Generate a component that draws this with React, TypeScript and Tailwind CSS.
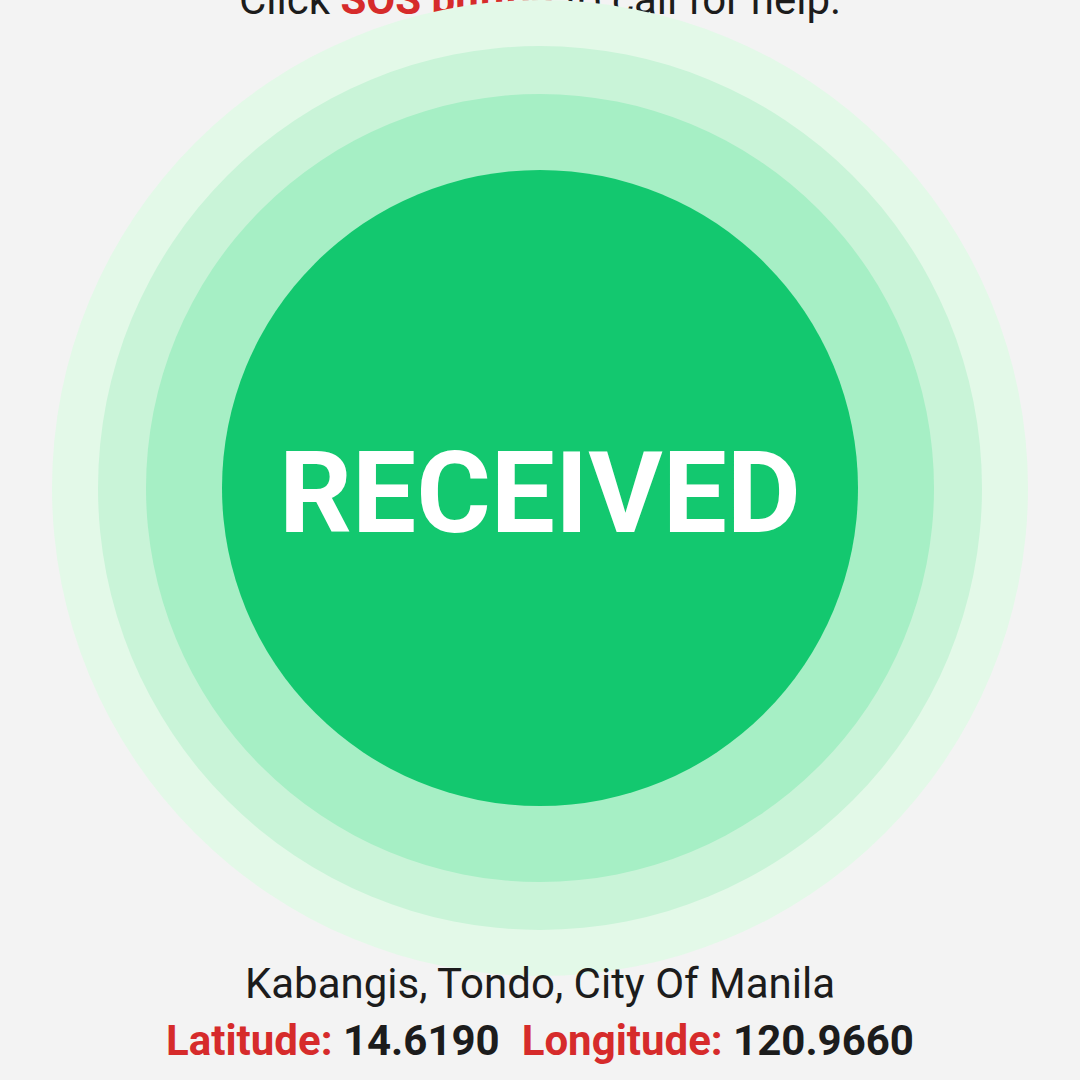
import React from "react";

export default function App() {
  return (
    <div
      className="w-[1080px] h-[1080px] overflow-hidden bg-[#f3f3f3] flex flex-col items-center"
      style={{ fontFamily: "Roboto, 'Liberation Sans', sans-serif" }}
    >
      <div className="mt-[-24px] text-[42px] leading-[48px] text-[#1c1c1c] text-center whitespace-nowrap">
        Click <span className="font-bold text-[#d62b2b]">SOS button</span> to call for help.
      </div>
      <div className="relative mt-[-24px] w-[976px] h-[976px] shrink-0 rounded-full bg-[#e3f9e8] flex items-center justify-center">
        <div className="w-[884px] h-[884px] rounded-full bg-[#c9f4d8] flex items-center justify-center">
          <div className="w-[788px] h-[788px] rounded-full bg-[#a6efc5] flex items-center justify-center">
            <div className="w-[636px] h-[636px] rounded-full bg-[#13c86f] flex items-center justify-center">
              <span className="pt-[10px] text-white font-bold text-[114px] leading-none">
                RECEIVED
              </span>
            </div>
          </div>
        </div>
      </div>
      <div className="relative mt-[-21px] text-[42px] leading-[57px] text-[#1c1c1c] text-center whitespace-nowrap">
        Kabangis, Tondo, City Of Manila
      </div>
      <div className="relative text-[42px] leading-[57px] font-bold text-center whitespace-nowrap">
        <span className="text-[#d62b2b]">Latitude:</span>
        <span className="text-[#1c1c1c]"> 14.6190</span>
        <span className="text-[#d62b2b] ml-[22px]">Longitude:</span>
        <span className="text-[#1c1c1c]"> 120.9660</span>
      </div>
    </div>
  );
}
